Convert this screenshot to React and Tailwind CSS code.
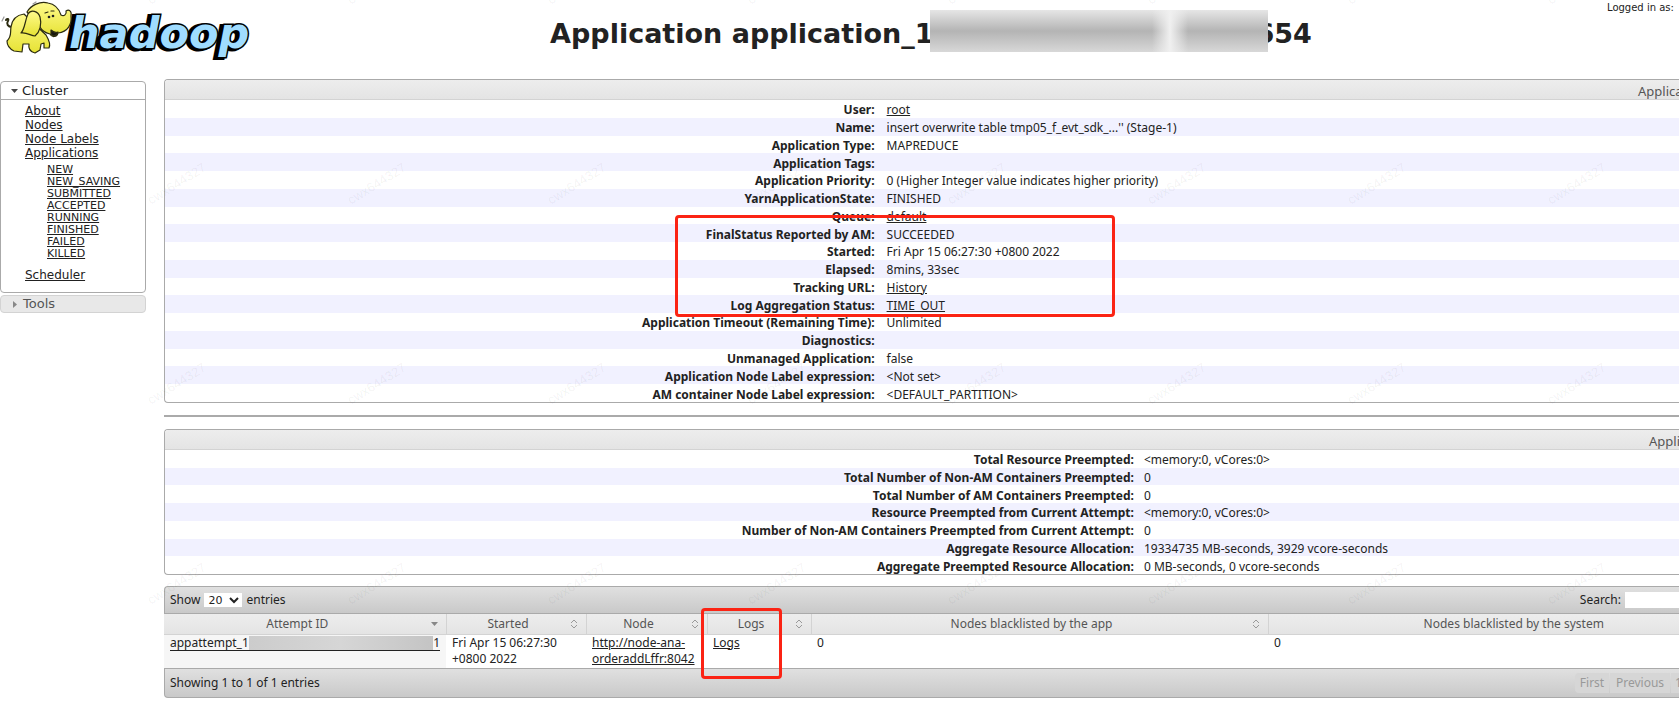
const overview = [
  { label: 'User:', value: 'root', link: true },
  { label: 'Name:', value: "insert overwrite table tmp05_f_evt_sdk_...'' (Stage-1)" },
  { label: 'Application Type:', value: 'MAPREDUCE' },
  { label: 'Application Tags:', value: '' },
  { label: 'Application Priority:', value: '0 (Higher Integer value indicates higher priority)' },
  { label: 'YarnApplicationState:', value: 'FINISHED' },
  { label: 'Queue:', value: 'default', link: true },
  { label: 'FinalStatus Reported by AM:', value: 'SUCCEEDED' },
  { label: 'Started:', value: 'Fri Apr 15 06:27:30 +0800 2022' },
  { label: 'Elapsed:', value: '8mins, 33sec' },
  { label: 'Tracking URL:', value: 'History', link: true },
  { label: 'Log Aggregation Status:', value: 'TIME_OUT', link: true },
  { label: 'Application Timeout (Remaining Time):', value: 'Unlimited' },
  { label: 'Diagnostics:', value: '' },
  { label: 'Unmanaged Application:', value: 'false' },
  { label: 'Application Node Label expression:', value: '<Not set>' },
  { label: 'AM container Node Label expression:', value: '<DEFAULT_PARTITION>' },
]

const metrics = [
  { label: 'Total Resource Preempted:', value: '<memory:0, vCores:0>' },
  { label: 'Total Number of Non-AM Containers Preempted:', value: '0' },
  { label: 'Total Number of AM Containers Preempted:', value: '0' },
  { label: 'Resource Preempted from Current Attempt:', value: '<memory:0, vCores:0>' },
  { label: 'Number of Non-AM Containers Preempted from Current Attempt:', value: '0' },
  { label: 'Aggregate Resource Allocation:', value: '19334735 MB-seconds, 3929 vcore-seconds' },
  { label: 'Aggregate Preempted Resource Allocation:', value: '0 MB-seconds, 0 vcore-seconds' },
]

const clusterLinks = ['About', 'Nodes', 'Node Labels', 'Applications']
const appStates = ['NEW', 'NEW_SAVING', 'SUBMITTED', 'ACCEPTED', 'RUNNING', 'FINISHED', 'FAILED', 'KILLED']

function Logo() {
  const word = {
    y: 48,
    fontSize: 43,
    fontWeight: 700,
    fontStyle: 'italic',
    fontFamily: '"DejaVu Sans", sans-serif',
  }
  return (
    <svg width="255" height="64" viewBox="0 0 255 64" role="img" aria-label="hadoop">
      <defs>
        <linearGradient id="skin" x1="0" y1="0" x2="0" y2="1">
          <stop offset="0" stopColor="#fffb8c" />
          <stop offset="1" stopColor="#e6e234" />
        </linearGradient>
      </defs>
      <text {...word} x="66" y="49" fill="#000" stroke="#000" strokeWidth="4" aria-hidden="true">hadoop</text>
      <text {...word} x="69" fill="#9fdcff" stroke="#000" strokeWidth="3" paintOrder="stroke">hadoop</text>
      <g stroke="#2c2c10" strokeWidth="1.2" strokeLinejoin="round" strokeLinecap="round">
        <path d="M12 27 C8 27 6 24 8 21 C9 19 7 18 6 20" fill="none" strokeWidth="2" />
        <path
          d="M24 14 C16 15 12 20 11 27 C10 33 12 36 7 41 C7 45 10 49 14 51 L22 52 L23 44 L29 44 C28 49 31 52 35 53 L40 50 L41 44 L44 43 L44 48 L49 48 C51 44 49 40 46 35 Z"
          fill="url(#skin)"
        />
        <path
          d="M27 12 C31 5 40 1 48 3 C55 4 59 9 61 15 C64 17 67 14 66 11 C69 9 72 11 71 16 C72 24 68 32 58 33 C57 37 52 38 50 34 C46 33 42 31 40 27 Z"
          fill="url(#skin)"
        />
        <path
          d="M28 14 C31 9 38 11 40 17 C42 24 40 32 35 36 C31 36 27 32 21 33 C25 29 25 20 28 14 Z"
          fill="url(#skin)"
        />
        <path d="M51 30 C53 32 55 33 58 32 C57 36 53 37 51 34 Z" fill="#171710" />
        <path d="M45 13 L48 12 M51 11 L54 11" fill="none" />
        <path d="M33 4 L36 2 M2 21 L4 17" fill="none" stroke="#999" />
      </g>
      <circle cx="49" cy="17" r="1.3" fill="#222" />
      <circle cx="53" cy="16" r="1.3" fill="#222" />
    </svg>
  )
}

function Watermark() {
  return (
    <div
      aria-hidden="true"
      className="pointer-events-none absolute inset-0 z-20 grid select-none auto-rows-[200px] grid-cols-[repeat(8,200px)] overflow-hidden pl-36 -mt-52"
    >
      {Array.from({ length: 32 }, (_, i) => (
        <span key={i} className="self-end justify-self-start -rotate-[32deg] font-['Liberation_Sans',sans-serif] text-[13px] leading-4 text-black/6">
          cwx644327
        </span>
      ))}
    </div>
  )
}

function Sidebar() {
  return (
    <nav className="w-[146px] shrink-0 pt-0.5 font-['DejaVu_Sans',sans-serif] text-[#212121]">
      <section className="rounded border border-[#aaa]">
        <h3>
          <button type="button" className="flex h-[18px] w-full items-center gap-1 border-b border-[#aaa] pl-2.5 text-[13px] leading-4">
            <svg width="7" height="4" viewBox="0 0 7 4"><path d="M0 0H7L3.5 4Z" fill="#454545" /></svg>
            Cluster
          </button>
        </h3>
        <ul className="pt-1 pb-2.5 pl-6 text-xs leading-[14px]">
          {clusterLinks.map((name) => (
            <li key={name}><a href="#" className="underline">{name}</a></li>
          ))}
          <li>
            <ul className="mt-1 mb-2 pl-[22px] text-[11px] leading-3">
              {appStates.map((name) => (
                <li key={name}><a href="#" className="underline">{name}</a></li>
              ))}
            </ul>
          </li>
          <li><a href="#" className="underline">Scheduler</a></li>
        </ul>
      </section>
      <h3 className="mt-0.5">
        <button type="button" className="flex h-[18px] w-full items-center gap-1.5 rounded border border-[#d3d3d3] bg-[#e8e8e8] pl-3 text-[13px] leading-4 text-[#555]">
          <svg width="4" height="7" viewBox="0 0 4 7"><path d="M0 0L4 3.5L0 7Z" fill="#888" /></svg>
          Tools
        </button>
      </h3>
    </nav>
  )
}

function InfoPanel({ title, titleClass, rows, labelClass, tableClass, children }) {
  return (
    <section className="relative overflow-hidden rounded-l border border-r-0 border-[#aaa]">
      <h2 className="flex h-5 justify-end border-b border-[#d3d3d3] bg-linear-to-b from-[#ededed] to-[#e4e4e4] text-[#555]">
        <span className={titleClass}>{title}</span>
      </h2>
      <table className={tableClass}>
        <tbody>
          {rows.map((row) => (
            <tr key={row.label} className="even:bg-[#f1f1ff]">
              <th scope="row" className={labelClass}>{row.label}</th>
              <td className="p-0 pt-0.5 pl-2.5">
                {row.link ? <a href="#" className="underline">{row.value}</a> : row.value}
              </td>
            </tr>
          ))}
        </tbody>
      </table>
      {children}
    </section>
  )
}

function SortIcon() {
  return (
    <svg width="8" height="10" viewBox="0 0 8 10" fill="none" stroke="#999" className="shrink-0">
      <path d="M1 4L4 1L7 4M1 6L4 9L7 6" />
    </svg>
  )
}

function HeadCell({ children, sorted, last }) {
  return (
    <th scope="col" className="h-5 border-r border-b border-[#d3d3d3] p-0 font-normal text-[#555] last:border-r-0">
      <span className={last ? 'flex items-center pl-20' : 'flex items-center pr-2'}>
        <span className="flex-1 text-center">{children}</span>
        {sorted && <svg width="7" height="4" viewBox="0 0 7 4"><path d="M0 0H7L3.5 4Z" fill="#888" /></svg>}
        {!sorted && !last && <SortIcon />}
      </span>
    </th>
  )
}

function Attempts() {
  return (
    <section className="relative">
      <div className="flex h-7 items-center justify-between rounded-tl border border-r-0 border-[#aaa] bg-linear-to-b from-[#e0e0e0] to-[#c9c9c9] pl-[5px]">
        <label className="flex items-center gap-1">
          Show
          <select defaultValue="20" className="h-[14px] w-[38px] bg-white font-['DejaVu_Sans',sans-serif] text-[11px] leading-3">
            <option>20</option>
            <option>50</option>
          </select>
          entries
        </label>
        <label className="flex items-center gap-1">
          Search:
          <input type="search" className="h-4 w-[54px] bg-white" />
        </label>
      </div>
      <table className="w-full table-fixed border-collapse">
        <colgroup>
          <col className="w-[282px]" />
          <col className="w-[140px]" />
          <col className="w-[121px]" />
          <col className="w-[104px]" />
          <col className="w-[457px]" />
          <col />
        </colgroup>
        <thead className="bg-linear-to-b from-[#ededed] to-[#e4e4e4]">
          <tr>
            <HeadCell sorted>Attempt ID</HeadCell>
            <HeadCell>Started</HeadCell>
            <HeadCell>Node</HeadCell>
            <HeadCell>Logs</HeadCell>
            <HeadCell>Nodes blacklisted by the app</HeadCell>
            <HeadCell last>Nodes blacklisted by the system</HeadCell>
          </tr>
        </thead>
        <tbody>
          <tr className="align-top leading-4">
            <td className="bg-[#f6f6f6] p-0 pt-px pl-1.5">
              <a href="#" className="flex w-[270px] border-b border-[#222] leading-[14px]">
                appattempt_1
                <span className="h-[14px] flex-1 bg-linear-to-r from-[#ccc] via-[#d6d6d6] to-[#c4c4c4]" />
                1
              </a>
            </td>
            <td className="p-0 pb-px pl-1.5">Fri Apr 15 06:27:30 +0800 2022</td>
            <td className="p-0 pb-px pl-1.5"><a href="#" className="underline">http://node-ana-orderaddLffr:8042</a></td>
            <td className="p-0 pb-px pl-1.5"><a href="#" className="underline">Logs</a></td>
            <td className="p-0 pb-px pl-1.5">0</td>
            <td className="p-0 pb-px pl-1.5">0</td>
          </tr>
        </tbody>
      </table>
      <div className="flex h-[30px] items-center justify-between overflow-hidden rounded-bl border border-r-0 border-[#aaa] bg-linear-to-b from-[#e0e0e0] to-[#c9c9c9] pl-[5px]">
        <span>Showing 1 to 1 of 1 entries</span>
        <div className="flex gap-px text-[#999]">
          <button type="button" disabled className="h-5 w-[34px] rounded-l bg-[#d6d6d6]">First</button>
          <button type="button" disabled className="h-5 w-[60px] bg-[#d6d6d6]">Previous</button>
          <button type="button" disabled className="h-5 w-2 bg-[#d6d6d6] pl-1">1</button>
        </div>
      </div>
      <div className="absolute top-[22px] left-[537px] h-[71px] w-[81px] rounded-sm border-[3px] border-[#fb2314]" />
    </section>
  )
}

export default function App() {
  return (
    <div className="relative min-h-screen overflow-hidden bg-white font-['Noto_Sans','Noto_Sans_CJK_SC',sans-serif] text-xs text-[#222]">
      <header className="flex h-[79px] items-start font-['DejaVu_Sans',sans-serif]">
        <Logo />
        <h1 className="flex flex-1 items-start justify-center pt-2.5 text-[27px] leading-[48px] font-bold whitespace-nowrap">
          Application application_1
          <span className="relative z-10 -mr-3 -ml-1 flex h-[42px] w-[338px] justify-end bg-linear-to-b from-[#e6e6e6] via-[#b4b4b4] to-[#d8d8d8]">
            <span className="mr-20 h-[42px] w-9 bg-linear-to-r from-transparent via-[#f0f0f0] to-transparent" />
          </span>
          654
        </h1>
        <p className="w-[72px] text-[10px] leading-4 whitespace-nowrap">Logged in as:</p>
      </header>
      <div className="flex items-start gap-[18px]">
        <Sidebar />
        <main className="min-w-0 flex-1">
          <InfoPanel
            title="Application Overview"
            titleClass="w-[41px] whitespace-nowrap text-[13px] leading-[22px]"
            rows={overview}
            labelClass="w-[47%] p-0 pt-0.5 pr-0.5 text-right font-bold"
            tableClass="h-[302px] w-full leading-[15px]"
          >
            <div className="absolute top-[135px] left-[510px] h-[102px] w-[440px] rounded-sm border-[3px] border-[#fb2314]" />
          </InfoPanel>
          <hr className="my-3 border-t-2 border-[#aaa]" />
          <InfoPanel
            title="Application Metrics"
            titleClass="w-[30px] whitespace-nowrap text-[13px] leading-[22px]"
            rows={metrics}
            labelClass="w-[64%] p-0 pt-0.5 text-right font-bold"
            tableClass="h-[124px] w-full leading-[15px]"
          />
          <div className="mt-[11px]">
            <Attempts />
          </div>
        </main>
      </div>
      <Watermark />
    </div>
  )
}
